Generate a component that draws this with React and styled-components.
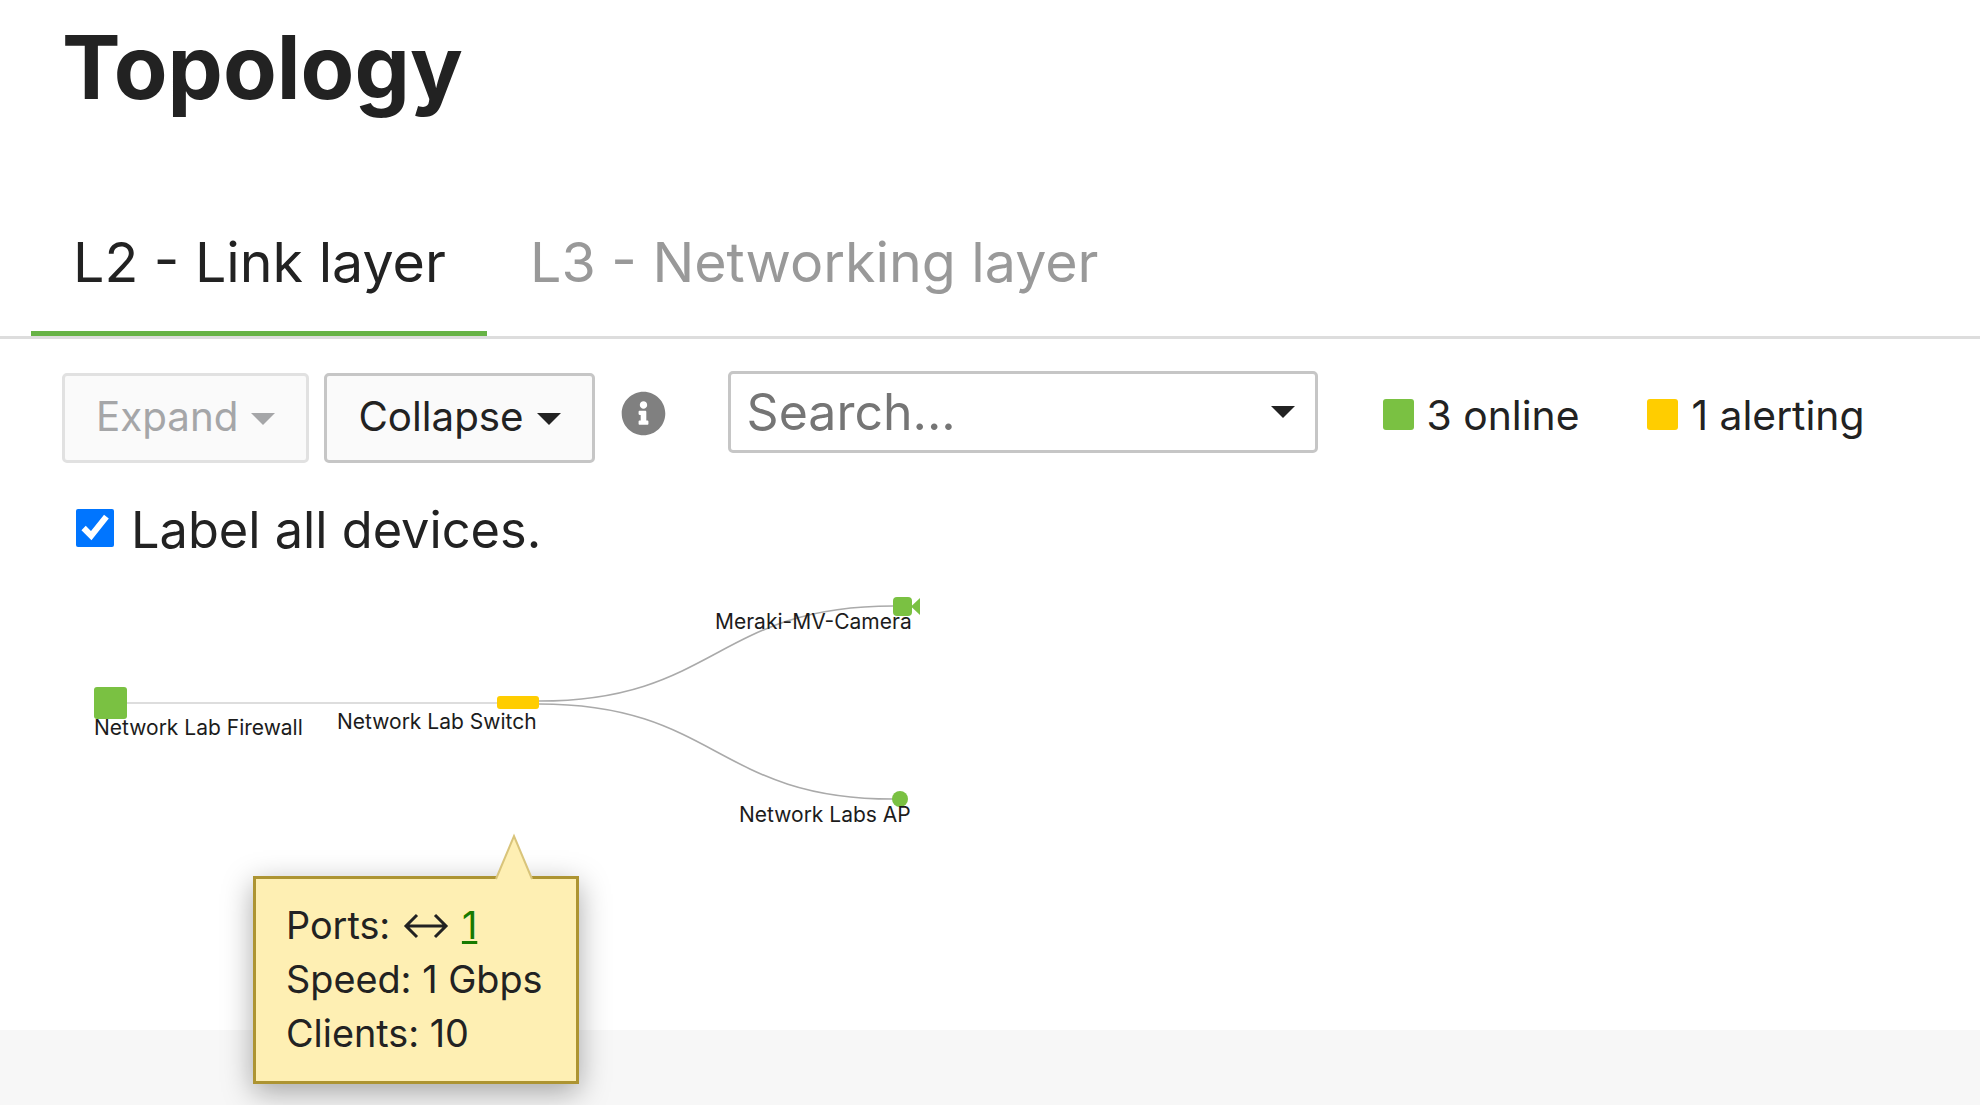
import React from "react";
import styled, { createGlobalStyle } from "styled-components";
import { FaInfoCircle } from "react-icons/fa";

const GlobalStyle = createGlobalStyle`
  html, body {
    margin: 0;
    height: 100%;
    background: #fff;
    color: #222;
    font-family: Inter, "Liberation Sans", sans-serif;
  }
`;

const Page = styled.div`
  position: relative;
  width: 1980px;
  height: 1105px;
  overflow: hidden;
  display: flex;
  flex-direction: column;
`;

const Title = styled.h1`
  margin: 0;
  height: 208px;
  padding: 14px 0 0 62px;
  box-sizing: border-box;
  font-size: 87.8px;
  line-height: 106px;
  font-weight: 700;
  color: #222;
`;

const Tabs = styled.div`
  display: flex;
  height: 131px;
  box-sizing: border-box;
  padding-left: 31px;
  border-bottom: 3px solid #ddd;
`;

const Tab = styled.div`
  width: ${({ $active }) => ($active ? "456px" : "auto")};
  height: 128px;
  box-sizing: border-box;
  padding: 20px 0 0 ${({ $active }) => ($active ? "42px" : "43px")};
  font-size: 55.5px;
  line-height: 68px;
  color: ${({ $active }) => ($active ? "#222" : "#999")};
  border-bottom: 5px solid ${({ $active }) => ($active ? "#67b346" : "transparent")};
`;

const Toolbar = styled.div`
  display: flex;
  align-items: flex-start;
  padding: 32px 0 0 62px;
  height: 162px;
  box-sizing: border-box;
`;

const DropButton = styled.div`
  display: flex;
  align-items: center;
  gap: 13px;
  height: 90px;
  margin: 2px 15px 0 0;
  padding: 0 31px 4px;
  box-sizing: border-box;
  background: #fafafa;
  border: 3px solid ${({ $disabled }) => ($disabled ? "#e1e1e1" : "#c6c6c6")};
  border-radius: 5px;
  font-size: 40.3px;
  color: ${({ $disabled }) => ($disabled ? "#a5a6a8" : "#222")};
`;

const Caret = styled.span`
  width: 0;
  height: 0;
  border-left: 12px solid transparent;
  border-right: 12px solid transparent;
  border-top: 12px solid currentColor;
  margin-top: ${({ $up }) => ($up ? "0" : "6px")};
`;

const InfoButton = styled.div`
  display: flex;
  margin: 20px 62px 0 11px;
  color: #808080;
  font-size: 45px;
`;

const SearchBox = styled.div`
  display: flex;
  align-items: center;
  width: 590px;
  height: 82px;
  box-sizing: border-box;
  padding: 0 20px 0 16px;
  border: 3px solid #c6c6c6;
  border-radius: 5px;
  background: #fff;
`;

const SearchInput = styled.input`
  flex: 1;
  min-width: 0;
  border: 0;
  outline: 0;
  padding: 0;
  background: transparent;
  font-family: inherit;
  font-size: 50px;
  color: #222;
  &::placeholder {
    color: #757575;
    opacity: 1;
  }
`;

const LegendItem = styled.div`
  display: flex;
  align-items: center;
  gap: 13px;
  height: 88px;
  margin-left: ${({ $first }) => ($first ? "65px" : "68px")};
  font-size: 40.8px;
  color: #222;
`;

const Swatch = styled.span`
  width: 31px;
  height: 31px;
  margin-top: -2px;
  border-radius: 3px;
  background: ${({ $color }) => $color};
`;

const CheckRow = styled.label`
  display: flex;
  align-items: center;
  gap: 17px;
  padding-left: 76px;
  height: 56px;
  font-size: 50.5px;
  color: #222;
`;

const CheckInput = styled.input`
  width: 38px;
  height: 38px;
  margin: -3px 0 0;
  accent-color: #0075ff;
`;

/* graph coordinates below are page coordinates, offset by the canvas top */
const CANVAS_TOP = 557;

const Graph = styled.div`
  position: relative;
  flex: 1;
`;

const Links = styled.svg`
  position: absolute;
  left: 0;
  top: -${CANVAS_TOP}px;
  width: 1980px;
  height: 1105px;
  fill: none;
`;

const Node = styled.div`
  position: absolute;
  left: ${({ $x }) => $x}px;
  top: ${({ $y }) => $y - CANVAS_TOP}px;
  width: ${({ $w }) => $w}px;
  height: ${({ $h }) => $h}px;
  background: ${({ $color }) => $color};
  border-radius: ${({ $round }) => ($round ? "50%" : "3px")};
`;

const NodeLabel = styled.div`
  position: absolute;
  left: ${({ $x }) => $x}px;
  top: ${({ $y }) => $y - CANVAS_TOP}px;
  font-size: 21px;
  line-height: 26px;
  color: #1c1c1c;
  white-space: nowrap;
`;

const CameraIcon = styled.svg`
  position: absolute;
  left: 893px;
  top: ${597 - CANVAS_TOP}px;
  width: 27px;
  height: 20px;
`;

const Footer = styled.div`
  height: 75px;
  background: #f7f7f7;
`;

const Tooltip = styled.div`
  position: absolute;
  left: 253px;
  top: 876px;
  width: 326px;
  height: 208px;
  box-sizing: border-box;
  padding: 19px 0 0 30px;
  background: #feefb3;
  border: 3px solid #ad9432;
  box-shadow: 0 8px 28px rgba(0, 0, 0, 0.34);
  font-size: 37.8px;
  line-height: 54px;
  color: #222;
`;

const TooltipArrow = styled.svg`
  position: absolute;
  left: 238px;
  top: -44px;
  width: 44px;
  height: 44px;
  overflow: visible;
`;

const PortLink = styled.a`
  color: #177a00;
  text-decoration: underline;
`;

const ArrowGlyph = styled.svg`
  width: 46px;
  height: 28px;
  margin: 0 13px 0 2px;
  vertical-align: -1px;
  fill: none;
  stroke: #222;
  stroke-width: 3;
`;

export default function App() {
  return (
    <Page>
      <GlobalStyle />
      <Title>Topology</Title>

      <Tabs>
        <Tab $active>L2 - Link layer</Tab>
        <Tab>L3 - Networking layer</Tab>
      </Tabs>

      <Toolbar>
        <DropButton $disabled>
          Expand <Caret />
        </DropButton>
        <DropButton>
          Collapse <Caret />
        </DropButton>
        <InfoButton>
          <FaInfoCircle />
        </InfoButton>
        <SearchBox>
          <SearchInput placeholder="Search..." />
          <Caret $up />
        </SearchBox>
        <LegendItem $first>
          <Swatch $color="#7ac142" />3 online
        </LegendItem>
        <LegendItem>
          <Swatch $color="#ffcd00" />1 alerting
        </LegendItem>
      </Toolbar>

      <CheckRow>
        <CheckInput type="checkbox" defaultChecked />
        Label all devices.
      </CheckRow>

      <Graph>
        <Links viewBox="0 0 1980 1105">
          <path d="M127 703 L497 703" stroke="#ddd" strokeWidth="2" />
          <path d="M539 701 C716 701 716 606 893 606" stroke="#aaa" strokeWidth="1.6" />
          <path d="M539 704 C716 704 716 799 893 799" stroke="#aaa" strokeWidth="1.6" />
        </Links>
        <Node $x={94} $y={687} $w={33} $h={32} $color="#7ac142" />
        <Node $x={497} $y={696} $w={42} $h={13} $color="#ffcd00" />
        <Node $x={892} $y={791} $w={16} $h={16} $round $color="#7ac142" />
        <CameraIcon viewBox="0 0 27 20">
          <rect x="0" y="0" width="19" height="19" rx="4" fill="#7ac142" />
          <path d="M18 9.5 L27 1 V18 Z" fill="#7ac142" />
        </CameraIcon>
        <NodeLabel $x={94} $y={715}>Network Lab Firewall</NodeLabel>
        <NodeLabel $x={337} $y={709}>Network Lab Switch</NodeLabel>
        <NodeLabel $x={715} $y={609}>Meraki-MV-Camera</NodeLabel>
        <NodeLabel $x={739} $y={802}>Network Labs AP</NodeLabel>
      </Graph>

      <Footer />

      <Tooltip>
        <TooltipArrow viewBox="0 0 44 44">
          <path d="M2 44 L20 1 L38 44" fill="#feefb3" stroke="#d9c47a" strokeWidth="2" />
        </TooltipArrow>
        <div>
          Ports:{" "}
          <ArrowGlyph viewBox="0 0 46 28">
            <path d="M3 14 H43 M14 3 L3 14 L14 25 M32 3 L43 14 L32 25" />
          </ArrowGlyph>
          <PortLink href="#">1</PortLink>
        </div>
        <div>Speed: 1 Gbps</div>
        <div>Clients: 10</div>
      </Tooltip>
    </Page>
  );
}
